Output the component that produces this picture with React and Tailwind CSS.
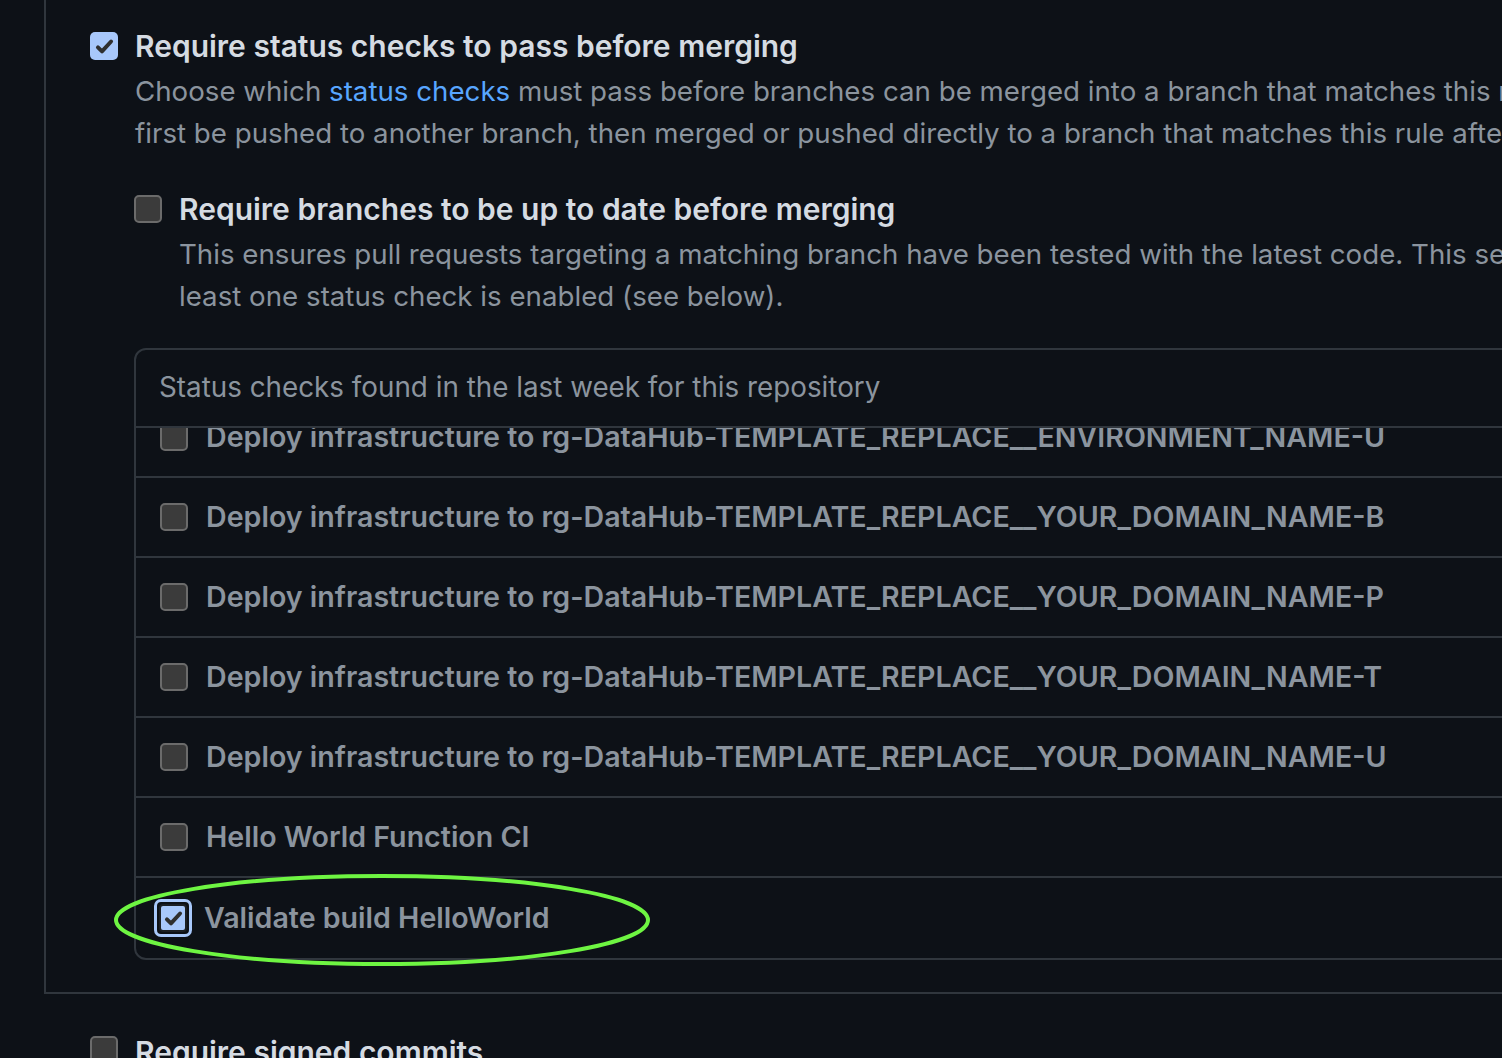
import React from "react";

const rows = [
  "Deploy infrastructure to rg-DataHub-TEMPLATE_REPLACE__YOUR_DOMAIN_NAME-B",
  "Deploy infrastructure to rg-DataHub-TEMPLATE_REPLACE__YOUR_DOMAIN_NAME-P",
  "Deploy infrastructure to rg-DataHub-TEMPLATE_REPLACE__YOUR_DOMAIN_NAME-T",
  "Deploy infrastructure to rg-DataHub-TEMPLATE_REPLACE__YOUR_DOMAIN_NAME-U",
  "Hello World Function CI",
];

function Check() {
  return (
    <svg viewBox="0 0 16 16" className="w-[21px] h-[21px]" fill="none">
      <path d="M3 8.6l3.1 3.1L13 4.2" stroke="#2f2f2f" strokeWidth="3" strokeLinecap="round" strokeLinejoin="round" />
    </svg>
  );
}

function Box({ checked = false }) {
  if (checked) {
    return (
      <span className="w-[28px] h-[28px] shrink-0 rounded-[5px] bg-[#a8c8fb] flex items-center justify-center">
        <Check />
      </span>
    );
  }
  return <span className="block w-[28px] h-[28px] shrink-0 rounded-[5px] bg-[#3b3b3b] border-2 border-[#6b6b6b]" />;
}

function Row({ children }) {
  return (
    <div className="h-[80px] pl-[24px] flex items-center gap-[18px] border-b-2 border-[#30363d]">
      <Box />
      <span className="text-[28.6px] font-semibold whitespace-nowrap">{children}</span>
    </div>
  );
}

export default function App() {
  return (
    <div
      className="w-[1502px] h-[1058px] overflow-hidden bg-[#0d1117] text-[#8b949e]"
      style={{ fontFamily: "Inter, 'Noto Sans', sans-serif" }}
    >
      <div className="ml-[44px] border-l-2 border-[#30363d]">
        <div className="pt-[30px] pl-[44px]">
          <div className="flex items-start gap-[17px]">
            <span className="mt-[2px]">
              <Box checked />
            </span>
            <div className="min-w-0">
              <div className="text-[30px] leading-[32px] font-semibold text-[#d5dbe2] whitespace-nowrap">
                Require status checks to pass before merging
              </div>
              <p className="mt-[8px] text-[27.7px] leading-[42px] whitespace-nowrap">
                Choose which <span className="text-[#58a6ff]">status checks</span> must pass before branches can be merged into a branch that matches this rule. When enabled, commits must
                <br />
                first be pushed to another branch, then merged or pushed directly to a branch that matches this rule after status checks have passed.
              </p>

              <div className="mt-[40px] -ml-[1px] flex items-start gap-[17px]">
                <span className="mt-[1px]">
                  <Box />
                </span>
                <div className="min-w-0">
                  <div className="text-[30px] leading-[30px] font-semibold text-[#d5dbe2] whitespace-nowrap">
                    Require branches to be up to date before merging
                  </div>
                  <p className="mt-[9px] text-[27.7px] leading-[42px] whitespace-nowrap">
                    This ensures pull requests targeting a matching branch have been tested with the latest code. This setting will not take effect unless at
                    <br />
                    least one status check is enabled (see below).
                  </p>
                </div>
              </div>

              <div className="relative mt-[31px] -ml-[1px] w-[1500px] rounded-[12px] border-2 border-[#30363d]">
                <div className="h-[78px] pl-[23px] flex items-center border-b-2 border-[#30363d] text-[27.8px] whitespace-nowrap">
                  Status checks found in the last week for this repository
                </div>
                <div className="h-[50px] overflow-hidden">
                  <div className="-mt-[30px]">
                    <Row>Deploy infrastructure to rg-DataHub-TEMPLATE_REPLACE__ENVIRONMENT_NAME-U</Row>
                  </div>
                </div>
                {rows.map((r) => (
                  <Row key={r}>{r}</Row>
                ))}
                <div className="relative h-[80px] pl-[18px] flex items-center gap-[12px]">
                  <span className="rounded-[7px] border-[3px] border-[#a8c8fb] p-[2px] bg-[#0d1117]">
                    <span className="w-[28px] h-[28px] rounded-[4px] border-2 border-[#1b1f24] bg-[#a8c8fb] flex items-center justify-center">
                      <Check />
                    </span>
                  </span>
                  <span className="text-[28.6px] font-semibold whitespace-nowrap">Validate build HelloWorld</span>
                  <svg
                    className="absolute left-[-22px] top-[-6px] pointer-events-none"
                    width="540"
                    height="96"
                    viewBox="0 0 540 96"
                  >
                    <ellipse cx="268" cy="48" rx="266" ry="44" fill="none" stroke="#6ef542" strokeWidth="4" />
                  </svg>
                </div>
              </div>
            </div>
          </div>
        </div>
        <div className="h-[32px]" />
      </div>
      <div className="ml-[44px] border-t-2 border-[#30363d] pt-[42px] pl-[46px] flex items-start gap-[17px]">
        <Box />
        <div className="text-[30px] leading-[32px] font-semibold text-[#d5dbe2] whitespace-nowrap">
          Require signed commits
        </div>
      </div>
    </div>
  );
}
